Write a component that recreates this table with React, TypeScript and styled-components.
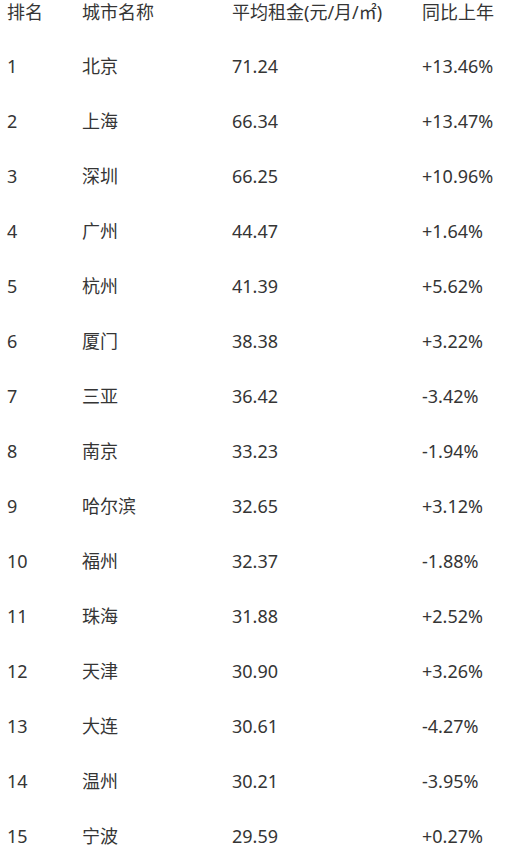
import React from 'react';
import styled, { createGlobalStyle } from 'styled-components';

const GlobalStyle = createGlobalStyle`
    html, body {
        margin: 0;
        padding: 0;
        background: #ffffff;
    }
    body {
        font-family: "Noto Sans", "Noto Sans CJK SC", sans-serif;
        color: #353535;
    }
`;

const Table = styled.div`
    width: 522px;
    display: flex;
    flex-direction: column;
`;

const Row = styled.div<{ $header?: boolean }>`
    display: grid;
    grid-template-columns: 75px 150px 190px 1fr;
    padding-left: 7px;
    height: ${p => (p.$header ? '39px' : '55px')};
    align-items: ${p => (p.$header ? 'start' : 'center')};
    font-size: 18px;
    line-height: 25px;
`;

const Cell = styled.div`
    white-space: nowrap;
    font-family: "Noto Sans", "Noto Sans CJK SC", sans-serif;
`;

const rows: [number, string, string, string][] = [
    [1, '北京', '71.24', '+13.46%'],
    [2, '上海', '66.34', '+13.47%'],
    [3, '深圳', '66.25', '+10.96%'],
    [4, '广州', '44.47', '+1.64%'],
    [5, '杭州', '41.39', '+5.62%'],
    [6, '厦门', '38.38', '+3.22%'],
    [7, '三亚', '36.42', '-3.42%'],
    [8, '南京', '33.23', '-1.94%'],
    [9, '哈尔滨', '32.65', '+3.12%'],
    [10, '福州', '32.37', '-1.88%'],
    [11, '珠海', '31.88', '+2.52%'],
    [12, '天津', '30.90', '+3.26%'],
    [13, '大连', '30.61', '-4.27%'],
    [14, '温州', '30.21', '-3.95%'],
    [15, '宁波', '29.59', '+0.27%'],
];

export default function App() {
    return (
        <>
            <GlobalStyle />
            <Table>
                <Row $header>
                    <Cell>排名</Cell>
                    <Cell>城市名称</Cell>
                    <Cell>平均租金(元/月/㎡)</Cell>
                    <Cell>同比上年</Cell>
                </Row>
                {rows.map(([rank, city, rent, change]) => (
                    <Row key={rank}>
                        <Cell>{rank}</Cell>
                        <Cell>{city}</Cell>
                        <Cell>{rent}</Cell>
                        <Cell>{change}</Cell>
                    </Row>
                ))}
            </Table>
        </>
    );
}
